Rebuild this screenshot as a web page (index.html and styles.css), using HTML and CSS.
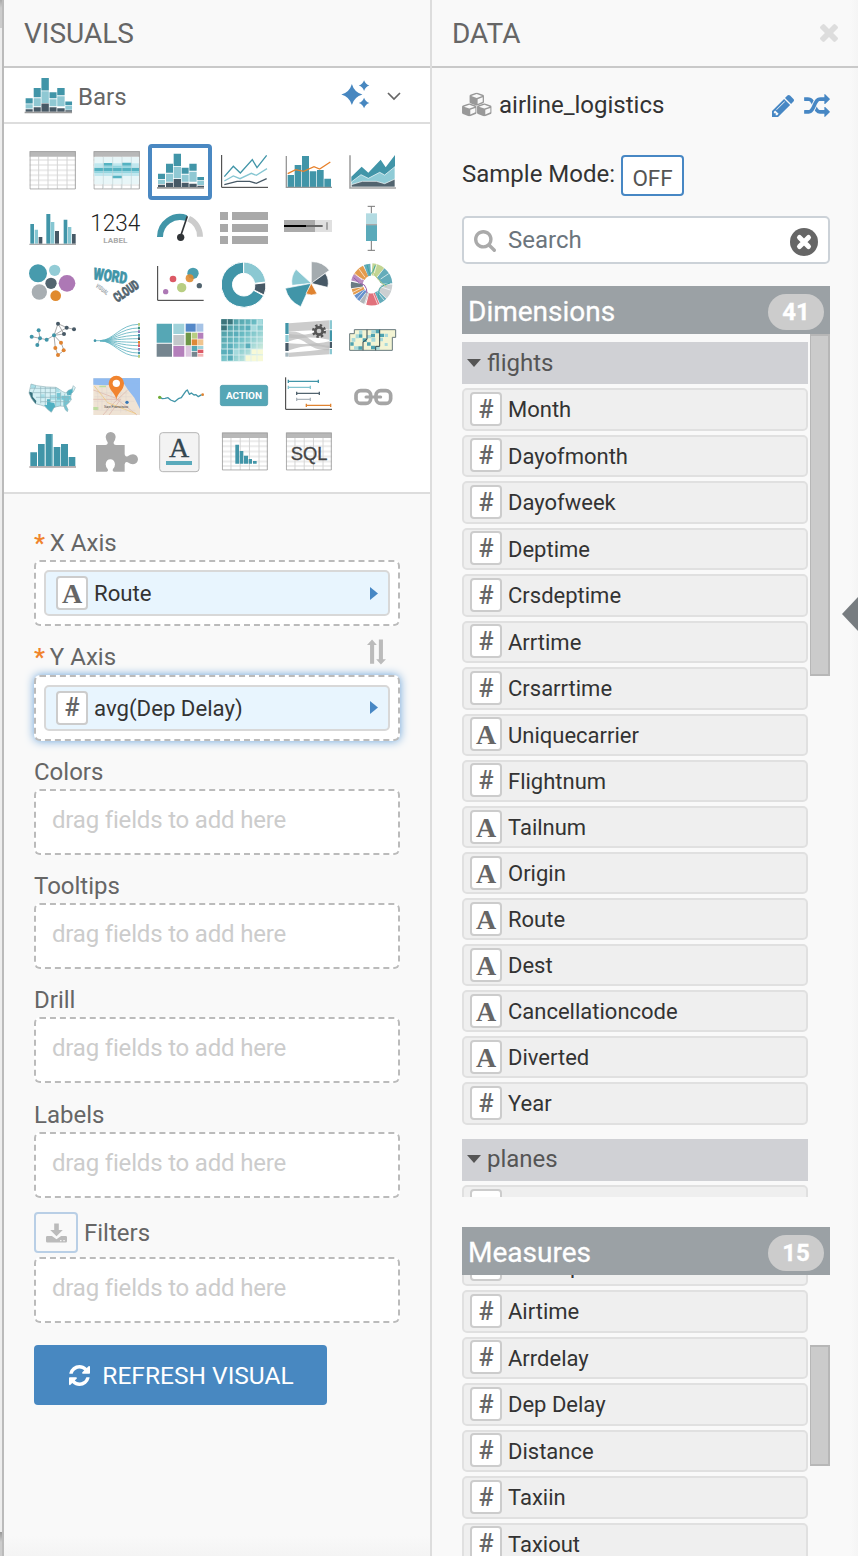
FILE: index.html
```html
<!DOCTYPE html>
<html lang="en">
<head>
<meta charset="utf-8">
<title>Visual builder</title>
<link rel="stylesheet" href="styles.css">
</head>
<body>
<svg class="defs" aria-hidden="true">
  <defs>
    <symbol id="bars" viewBox="440 38 144 110">
      <path fill="#4195a8" d="M444 101h21v16h-21zM468 71h21v27h-21zM491 41h22v37h-22zM515 83h21v18h-21zM538 71h22v21h-22zM562 111h20v10h-20z"/>
      <path fill="#8fc8d3" d="M444 119h21v13h-21zM468 101h21v24h-21zM491 80h22v35h-22zM515 104h21v21h-21zM538 95h22v30h-22zM562 123h20v12h-20z"/>
      <path fill="#475966" d="M444 134h21v7h-21zM468 128h21v13h-21zM491 117h22v24h-22zM515 128h21v13h-21zM538 131h22v10h-22zM562 137h20v4h-20z"/>
      <path fill="#999" d="M441 141h141v5h-141z"/>
    </symbol>
    <symbol id="sheet" viewBox="0 0 140 116">
      <path fill="#fff" d="M0 0h140v116H0z"/>
      <path fill="#ececec" d="M0 24h140v6H0zM0 39h140v6H0zM0 55h140v6H0zM0 70h140v6H0zM0 85h140v6H0zM0 99h140v6H0z"/>
      <path fill="none" stroke="#d4d4d4" stroke-width="3" d="M28 16v98M56 16v98M84 16v98M113 16v98"/>
      <path fill="#b8b8b8" d="M0 0h140v17H0z"/>
      <path fill="none" stroke="#a5a5a5" stroke-width="3" d="M2 2h136v112H2z"/>
    </symbol>
    <symbol id="caret" viewBox="0 0 14 8"><path d="M0 0h14L7 8z"/></symbol>
    <symbol id="cube" viewBox="0 0 46 42">
      <path fill="#999" d="M0 11q0-3 3-4L21 1q2-1 4 0l18 6q3 1 3 4v19q0 2-3 4l-18 7q-2 1-4 0L3 34q-3-2-3-4z"/>
      <path fill="#f9f9f9" d="M6 11l17-6 17 6-17 6zM26 21l16-6v14l-16 7z"/>
    </symbol>
  </defs>
</svg>
<div class="app">
  <div class="edge"></div>
  <section class="visuals">
    <h1 class="title">VISUALS</h1>
    <div class="current">
      <svg class="current-icon"><use href="#bars"/></svg>
      <span class="current-name">Bars</span>
      <svg class="sparkle" viewBox="1024 240 86 88"><path d="M1056 252q7 25 32 32-25 7-32 32-7-25-32-32 25-7 32-32zM1093 241q4 12 16 16-12 4-16 16-4-12-16-16 12-4 16-16zM1093 294q4 12 16 16-12 4-16 16-4-12-16-16 12-4 16-16z"/></svg>
      <svg class="chevron" viewBox="0 0 14 9"><path d="M1 1l6 6 6-6"/></svg>
    </div>

    <div class="gallery">
      <svg viewBox="30 12 192 168"><use href="#sheet" x="58" y="33" width="140" height="116"/></svg>
      <svg viewBox="222 12 192 168">
        <use href="#sheet" x="250" y="33" width="140" height="116"/>
        <path fill="#e8f6f8" d="M253 51h134v82H253z"/>
        <path fill="#c0e7ee" d="M253 70h134v12H253zM253 94h134v14H253z"/>
        <path fill="#55b3c2" d="M253 83h134v11H253zM281 69h26v8h-26zM336 68h28v9h-28zM307 107h29v8h-29z"/>
        <path fill="#94d5df" d="M281 77h83v6h-83zM253 94h134v5H253z"/>
        <path fill="none" stroke="#c3d3d6" stroke-width="2" d="M280 50v95M308 50v95M336 50v95M364 50v95"/>
      </svg>
      <svg class="selected" viewBox="414 12 192 168"><use href="#bars" x="440" y="38" width="144" height="110"/></svg>
      <svg viewBox="6 12 192 168">
        <g fill="none" stroke-width="4"><path stroke="#333" stroke-width="3" d="M35 45v97h139"/><path stroke="#4195a8" d="M43 110l27-31 21 20 36-40 14 24 29-37"/><path stroke="#86c6d2" d="M43 123l27-15 20 8 34-16 15 6 32-20"/><path stroke="#475966" d="M43 134l38-10h38l20 6 31-14"/></g>
      </svg>
      <svg viewBox="198 12 192 168">
        <path fill="#4195a8" d="M233 105h19v36h-19zM254 75h20v66h-20zM276 48h21v93h-21zM299 94h20v47h-20zM321 90h20v51h-20zM343 116h20v25h-20z"/>
        <path fill="none" stroke="#999" stroke-width="4" d="M229 48v94h137"/><path fill="none" stroke="#e8812b" stroke-width="4" d="M233 101l24-12 24 5 31-14 17 7 32-21"/>
      </svg>
      <svg viewBox="390 12 192 168">
        <path fill="#4195a8" d="M424 110l31-30 20 18 37-39 15 23 28-37v96H424z"/>
        <path fill="#8fcbd6" stroke="#fff" stroke-width="2" d="M424 126l29-22 22 11 34-18 15 8 31-25v61H424z"/>
        <path fill="#52646f" stroke="#fff" stroke-width="2" d="M424 134l33-10h42l25 7 31-14v24H424z"/>
        <path fill="none" stroke="#a5a5a5" stroke-width="5" d="M420 46v98h138"/>
      </svg>

      <svg viewBox="30 180 192 168">
        <path fill="#4195a8" d="M61 252h11v59H61zM109 222h12v89h-12zM161 239h11v72h-11z"/><path fill="#86c6d2" d="M74 269h10v42H74zM122 246h11v65h-11zM174 261h10v50h-10z"/><path fill="#475966" d="M86 291h11v20H86zM135 273h12v38h-12zM186 282h11v29h-11z"/><path fill="#aaa" d="M58 311h140v4H58z"/>
      </svg>
      <svg viewBox="222 180 192 168">
        <text class="light" x="241" y="272" font-size="70" textLength="150" lengthAdjust="spacingAndGlyphs" fill="#222">1234</text>
        <text class="bold" x="280" y="308" font-size="24" textLength="72" lengthAdjust="spacingAndGlyphs" fill="#aaa">LABEL</text>
      </svg>
      <svg viewBox="414 180 192 168">
        <path fill="none" stroke="#4195a8" stroke-width="18" d="M450 291a60 60 0 0 1 79-57"/><path fill="none" stroke="#ccc" stroke-width="18" d="M536 236a60 60 0 0 1 34 54"/>
        <path stroke="#303437" stroke-width="5" d="M511 291l21-62"/><circle cx="512" cy="292" r="11" fill="#303437"/>
      </svg>
      <svg viewBox="6 180 192 168"><path fill="#a9a9a9" d="M30 216h24v24H30zM66 216h108v24H66zM30 252h24v24H30zM66 252h108v24H66zM30 288h24v24H30zM66 288h108v24H66z"/></svg>
      <svg viewBox="198 180 192 168"><path fill="#aaa" d="M222 240h93v36h-93z"/><path fill="#e0e0e0" d="M315 240h51v36h-51z"/><path fill="#666" d="M222 255h116v6H222z"/><path d="M222 255h66v6h-66z"/><path fill="#888" d="M349 247h4v22h-4z"/></svg>
      <svg viewBox="390 180 192 168"><path fill="none" stroke="#777" stroke-width="3" d="M473 199h22M484 199v21M484 303v28M473 331h22"/><path fill="#b3dbe2" d="M468 220h33v33h-33z"/><path fill="#5aaaba" d="M468 255h33v48h-33z"/><path fill="#aaa" d="M468 252h33v4h-33z"/></svg>

      <svg viewBox="30 3 192 168"><circle cx="84" cy="55" r="27" fill="#479bad"/><circle cx="134" cy="46" r="17" fill="#93ccd6"/><circle cx="123" cy="85" r="17" fill="#52646f"/><circle cx="171" cy="85" r="25" fill="#ad78b5"/><circle cx="88" cy="111" r="23" fill="#a8aeb2"/><circle cx="137" cy="122" r="16" fill="#e08a2e"/></svg>
      <svg viewBox="222 3 192 168">
        <text class="black" transform="translate(248 72) rotate(8)" font-size="48" textLength="102" lengthAdjust="spacingAndGlyphs" fill="#4195a8" stroke="#4195a8" stroke-width="2">WORD</text>
        <text class="black" transform="translate(256 95) rotate(38)" font-size="18" textLength="43" lengthAdjust="spacingAndGlyphs" fill="#a5adb2">VISUAL</text>
        <text class="black" transform="translate(322 143) rotate(-34)" font-size="40" textLength="83" lengthAdjust="spacingAndGlyphs" fill="#52646f" stroke="#52646f" stroke-width="2">CLOUD</text>
      </svg>
      <svg viewBox="414 3 192 168"><path fill="none" stroke="#333" stroke-width="3" d="M443 33v103h138"/><circle cx="549" cy="55" r="17" fill="#4a9eaf"/><circle cx="539" cy="70" r="12" fill="#df8b32" opacity=".9"/><circle cx="489" cy="72" r="10" fill="#dc5965"/><circle cx="515" cy="98" r="14" fill="#b8ce82"/><circle cx="568" cy="92" r="8" fill="#52646f"/><circle cx="467" cy="110" r="8" fill="#ad78b5"/></svg>
      <svg viewBox="6 3 192 168" stroke="#fff" stroke-width="3"><path fill="#4195a8" d="M101 21v34a34 34 0 1 0 30 51l30 16A68 68 0 1 1 101 21z"/><path fill="#8bc8d2" d="M101 21a68 68 0 0 1 66 60l-33 4a34 34 0 0 0-33-30z"/><path fill="#475966" d="M167 83a68 68 0 0 1-5 37l-30-15a34 34 0 0 0 2-18z"/></svg>
      <svg viewBox="198 3 192 168" stroke="#fff" stroke-width="2"><path fill="#a4abaf" d="M304 85V20a65 65 0 0 1 54 26z"/><path fill="#475966" d="M304 85l42-30a52 52 0 0 1 7 42z"/><path fill="#8bc8d2" d="M304 85l-46-42a62 62 0 0 0-12 48z"/><path fill="#4195a8" d="M304 85l-78 15a80 80 0 0 0 46 55z"/><path fill="#e08330" d="M304 85l-16 31a36 36 0 0 0 33 0z"/></svg>
      <svg viewBox="390 3 192 168">
        <g fill="none" stroke-width="36" opacity=".85"><path stroke="#b8ce82" d="M486 43a45 45 0 0 1 25 10"/><path stroke="#4a9eaf" d="M512 54a45 45 0 0 1 17 32"/><path stroke="#c3c7c9" d="M529 88a45 45 0 0 1-12 30"/><path stroke="#4a9eaf" d="M516 119a45 45 0 0 1-14 10"/><path stroke="#dc5965" d="M501 130a45 45 0 0 1-28 2"/><path stroke="#a4abaf" d="M471 131a45 45 0 0 1-11-6"/><path stroke="#4d7fc4" d="M459 124a45 45 0 0 1-11-12"/><path stroke="#e08a2e" d="M447 111a45 45 0 0 1-4-12"/><path stroke="#52646f" d="M441 97a45 45 0 0 1 0-14"/><path stroke="#ad78b5" d="M441 81a45 45 0 0 1 6-14"/><path stroke="#e08a2e" d="M448 66a45 45 0 0 1 19-18"/><path stroke="#4a9eaf" d="M468 47a45 45 0 0 1 14-3"/></g>
        <path fill="#fff" d="M460 86q16-9 18-23h13q7 15 27 24-12 6-14 20-16-4-24 8-6-19-20-29z"/>
        <path fill="none" stroke="#fff" stroke-width="2" d="M434 55l22 20M447 42l18 25M500 28l-9 33M536 56l-24 16M541 105l-31-10M522 135l-21-26M503 148l-15-37M463 148l12-36M440 132l24-27M425 114l32-16M422 78l32 8"/>
        <path fill="none" stroke="#995cae" stroke-width="3" d="M431 68q17 20 32 22 8 10 8 24"/><path fill="none" stroke="#3fa7a5" stroke-width="3" d="M471 29q6 23 9 30 10-6 16-28M540 84q-20 5-29 14-7 8-4 34"/><path fill="none" stroke="#b8ce82" stroke-width="3" d="M491 53q12 25 38 41"/>
      </svg>

      <svg viewBox="30 171 192 168"><path fill="none" stroke="#aaa" stroke-width="3" d="M65 245l25 5 20 4 22-13M86 226l4 24-8 20M132 241l12-35 26 12-38 23 30-4-18-31M170 218l22 5M132 241l4 38 8 21 18-14-9-23-21-22"/><g fill="#4195a8"><circle cx="65" cy="245" r="6"/><circle cx="86" cy="226" r="6"/><circle cx="90" cy="250" r="6"/><circle cx="82" cy="270" r="6"/><circle cx="110" cy="254" r="6"/><circle cx="132" cy="241" r="6"/></g><g fill="#475966"><circle cx="144" cy="206" r="6"/><circle cx="170" cy="218" r="6"/><circle cx="192" cy="223" r="6"/><circle cx="162" cy="237" r="6"/></g><g fill="#e08330"><circle cx="136" cy="279" r="6"/><circle cx="153" cy="263" r="6"/><circle cx="161" cy="286" r="6"/><circle cx="144" cy="300" r="6"/></g></svg>
      <svg viewBox="222 171 192 168"><path fill="none" stroke="#5fb2c0" stroke-width="2.5" d="M254 257h16C310 257 330 208 386 208M270 257C310 257 330 219 386 219M270 257C310 257 330 230 386 230M270 257C310 257 330 241 386 241M270 257C310 257 330 251 386 251M270 257C310 257 330 262 386 262M270 257C310 257 330 272 386 272M270 257C310 257 330 283 386 283M270 257C310 257 330 294 386 294M270 257C310 257 330 304 386 304"/><circle cx="255" cy="257" r="4" fill="#4195a8"/><path fill="#b8ce82" d="M384 204h6v8h-6zM384 300h6v8h-6z"/><path fill="#3e917d" d="M384 215h6v8h-6z"/><path fill="#8e77b9" d="M384 226h6v8h-6zM384 279h6v8h-6z"/><path fill="#4195a8" d="M384 237h6v8h-6zM384 290h6v8h-6z"/><path fill="#475966" d="M384 247h6v8h-6z"/><path fill="#e08330" d="M384 258h6v8h-6z"/><path fill="#dc5965" d="M384 268h6v8h-6z"/></svg>
      <svg viewBox="414 171 192 168"><path fill="#56a7b5" d="M440 206h46v57h-46zM545 273h17v15h-17z"/><path fill="#75858f" d="M440 266h46v39h-46zM545 290h17v15h-17z"/><path fill="#a0d2da" d="M490 206h33v31h-33zM563 273h17v9h-17z"/><path fill="#c2c7ca" d="M490 240h33v31h-33z"/><path fill="#b47fbb" d="M490 273h33v32h-33zM563 233h17v18h-17z"/><path fill="#5488c8" d="M527 206h30v24h-30z"/><path fill="#a6c3e6" d="M559 206h21v24h-21z"/><path fill="#6e9748" d="M527 233h16v38h-16z"/><path fill="#b8ce82" d="M545 233h17v18h-17z"/><path fill="#df8937" d="M545 253h17v18h-17z"/><path fill="#f0c48e" d="M563 253h17v18h-17z"/><path fill="#dcc6df" d="M527 273h16v32h-16z"/><path fill="#dc5965" d="M563 284h17v10h-17z"/><path fill="#f2b5b5" d="M563 296h17v9h-17z"/></svg>
      <svg viewBox="6 171 192 168">
        <defs><linearGradient id="heat" x1="0" y1="0" x2="1" y2="1"><stop offset="0" stop-color="#418f97"/><stop offset=".45" stop-color="#6bbdc5"/><stop offset=".7" stop-color="#a9dbd9"/><stop offset="1" stop-color="#f8fbdc"/></linearGradient></defs>
        <path fill="url(#heat)" d="M34 193h125v126H34z"/><path fill="#3d747b" d="M34 193h34v15H34zM34 210h17v16H34z"/><path fill="#5aaebb" d="M70 228h16v16H70zM106 211h16v15h-16zM52 264h17v16H52zM106 264h16v16h-16zM52 282h17v16H52zM34 282h17v16H34zM52 300h17v16H52z"/><path fill="#a5dadd" d="M124 211h17v16h-17zM141 193h17v16h-17zM70 282h16v16H70z"/><path fill="#f7f9d7" d="M124 282h35v16h-35zM106 300h53v18h-53z"/>
        <path fill="none" stroke="#ddeff0" stroke-width="2.5" d="M52 193v126M70 193v126M87 193v126M105 193v126M123 193v126M141 193v126M34 210h125M34 228h125M34 246h125M34 264h125M34 282h125M34 300h125"/>
      </svg>
      <svg viewBox="198 171 192 168"><path fill="#ccc" d="M237 205l121-9v26q-70 6-121 7zM237 237q50 9 121-15v32q-70-15-121 5zM237 265q70 6 121-6v21q-60-16-121 6zM237 293q60-4 121-12v17l-121 8z"/><path fill="#bbb" d="M237 229c60 0 60 43 121 43v14c-70 0-60-38-121-38z" opacity=".7"/><path fill="#4195a8" d="M226 204h10v33h-10zM359 226h7v33h-7z"/><path fill="#8bc8d2" d="M226 240h10v21h-10zM359 196h7v27h-7zM359 282h7v16h-7z"/><path fill="#475966" d="M226 264h10v24h-10zM359 261h7v18h-7z"/><path fill="#a4b6bd" d="M226 293h10v12h-10z"/><circle cx="327" cy="228" r="17" fill="none" stroke="#555" stroke-width="8" stroke-dasharray="7 6.35"/><circle cx="327" cy="228" r="11" fill="#ccc" stroke="#555" stroke-width="8"/></svg>
      <svg viewBox="390 171 192 168"><path fill="#f3f4d4" stroke="#65777b" stroke-width="3" d="M433 224h124v23h-10v39H419v-50h14z"/><path fill="#a8d9da" d="M437 238h10v12h-10zM470 240h13v10h-13zM484 225h12v10h-12zM524 236h10v10h-10zM508 248h11v11h-11zM432 274h13v10h-13zM497 274h12v10h-12zM524 264h9v9h-9zM425 249h11v11h-11zM447 226h10v11h-10zM484 249h12v11h-12z"/><path fill="#4da2b0" d="M447 238h10v10h-10zM458 250h12v11h-12zM483 236h12v11h-12zM509 236h13v10h-13zM421 262h10v10h-10zM445 274h12v10h-12zM471 262h11v10h-11zM483 272h12v11h-12zM497 224h12v11h-12z"/><path fill="none" stroke="#31484e" stroke-width="3" d="M471 224v29l-12 8v25M509 224v50h-12v12"/></svg>

      <svg viewBox="30 9 192 168">
        <defs><clipPath id="usa"><path d="M63 57l17 5 30 4 28 1 10 6 10 7 10 4 7-8 11-4 4-10 6 6-6 12-6 6-2 10 2 8-8 10-8 7 6 13-2 6-6-6-4-10-12-1-10 2-8 3-8 14-10-8-10-10-12-4-16-4-12-16-7-16z"/></clipPath></defs>
        <g clip-path="url(#usa)"><path fill="#d5f0f4" d="M50 50h150v100H50z"/><path fill="#a9dfe8" d="M63 57h15v12H63zM120 90h18v14h-18zM137 68h12v14h-12zM137 104h16v22h-16zM92 88h12v12H92z"/><path fill="#73c6d4" d="M140 84h12v20h-12zM154 92h32v12h-32zM160 104h18v36h-18z"/><path fill="#38727e" d="M55 79l13 4v12l11 13-2 10-13-8z"/><path fill="#4fb0c2" d="M111 103h10v9l12 2 3 12-12 18-10-9-12-15h9zM166 74l22-4v20h-16z"/><path fill="none" stroke="#8fb5bc" stroke-width="2" d="M78 61l-10 23M92 64v51M106 66v54M121 66v42M137 66v60M152 80v44M164 86v50M174 80v30M58 70h80M68 83h70M78 97h96M92 110h90"/></g>
        <path fill="none" stroke="#94b4ba" stroke-width="2" d="M63 57l17 5 30 4 28 1 10 6 10 7 10 4 7-8 11-4 4-10 6 6-6 12-6 6-2 10 2 8-8 10-8 7 6 13-2 6-6-6-4-10-12-1-10 2-8 3-8 14-10-8-10-10-12-4-16-4-12-16-7-16z"/>
      </svg>
      <svg viewBox="222 9 192 168"><path fill="#efe3d4" d="M250 40h140v110H250z"/><path fill="#8fbaf0" d="M325 40h65v92l-17-34-18-22-20-30z"/><path fill="#8fbaf0" d="M250 40h140v14l-62 2-40 5-38-2z"/><path fill="#bddd9e" d="M250 126h15v9h-15zM268 62h20v5h-20z"/><path fill="none" stroke="#ddb1a6" stroke-width="2" d="M250 75l66 24 65 51M279 150l26-30 48-45M250 103h82l-35 47"/><path fill="none" stroke="#f2c66a" stroke-width="2" d="M253 63l40 50 85 33"/><path fill="none" stroke="#d8cfca" d="M263 72v65M276 68v66M290 65v78M304 60v83M332 65v78M348 74v67M257 84h98M253 95h111M252 109h121M254 136h122"/><circle cx="351" cy="112" r="5" fill="#3777b6"/><text x="282" y="128" font-size="12" textLength="73" lengthAdjust="spacingAndGlyphs" fill="#444">San Francisco</text><path fill="#f1842f" d="M319 104c-2-18-23-28-23-49a23 23 0 1 1 46 0c0 21-21 31-23 49z"/><circle cx="319" cy="55" r="11" fill="#fff"/></svg>
      <svg viewBox="414 9 192 168"><path fill="none" stroke="#4195a8" stroke-width="4" stroke-linejoin="round" d="M447 96l10 5 8-1 9-2 8 7 12 5 11-9 9-3 13-19 5-4 6 13 6-4 8 6 6-1 7 6 10-6"/><circle cx="449" cy="97" r="5" fill="#71ac36"/><circle cx="578" cy="89" r="4" fill="#e08330"/></svg>
      <svg viewBox="6 9 192 168"><rect x="31" y="61" width="142" height="61" rx="6" fill="#55a6b6" stroke="#3e92a5" stroke-width="2"/><text class="bold" x="48" y="101" font-size="27" textLength="108" lengthAdjust="spacingAndGlyphs" fill="#fff">ACTION</text></svg>
      <svg viewBox="198 9 192 168" fill="none" stroke-width="4"><path stroke="#333" stroke-width="3" d="M227 37v96h139"/><path stroke="#4195a8" d="M235 49h90M235 44v10M325 44v10"/><path stroke="#83c4cf" d="M235 67h66M235 62v10M301 62v10"/><path stroke="#52646f" d="M260 85h68M260 80v10M328 80v10"/><path stroke="#acb5bc" d="M260 103h41M260 98v10M301 98v10"/><path stroke="#e08330" d="M289 121h73M289 116v10M362 116v10"/></svg>
      <svg viewBox="390 9 192 168" fill="none" stroke="#a5a5a5" stroke-width="11"><rect x="438" y="77" width="44" height="38" rx="14"/><rect x="498" y="77" width="44" height="38" rx="14"/><path stroke-width="9" stroke-linecap="round" d="M468 96h44"/></svg>

      <svg viewBox="30 177 192 168"><path fill="#4195a8" d="M61 262h20v42H61zM84 237h20v67H84zM107 207h21v97h-21zM131 246h20v58h-20zM153 237h21v67h-21zM176 276h20v28h-20z"/><path fill="#8bc8d2" d="M125 207h3v97h-3z"/><path fill="#a99fa0" d="M58 304h140v4H58z"/></svg>
      <svg viewBox="222 177 192 168"><path fill="#a9a9a9" d="M258 240h28q8 0 7-8-5-7-6-16 1-14 15-15 14 1 15 15-1 9-6 16-1 8 7 8h26v28q2 9 9 6 8-6 16-6 14 1 15 15-1 13-15 15-8 0-16-6-7-3-9 6v22h-32q-6-1-3-8 6-6 6-14-2-15-14-15t-14 15q0 8 6 14 3 7-3 8h-32z"/></svg>
      <svg viewBox="414 177 192 168"><rect x="449" y="203" width="118" height="117" rx="9" fill="#f3f3f3" stroke="#b5b5b5" stroke-width="3"/><text class="serif" x="477" y="277" font-size="84" fill="#34464f" stroke="#34464f">A</text><path fill="#5aaabb" d="M468 288h78v12h-78z"/></svg>
      <svg viewBox="6 177 192 168"><use href="#sheet" x="35" y="202" width="139" height="115"/><path fill="#4195a8" d="M76 239h11v57H76zM89 258h11v38H89zM102 272h12v24h-12zM116 282h10v14h-10zM129 288h11v8h-11z"/></svg>
      <svg viewBox="198 177 192 168"><use href="#sheet" x="227" y="202" width="139" height="115"/><text class="sans" x="242" y="284" font-size="55" fill="#444" stroke="#444">SQL</text></svg>
    </div>

    <div class="shelves">
      <div class="label"><b>*</b><span> X Axis</span></div>
      <div class="shelf"><div class="chip"><i class="type alpha">A</i><span>Route</span><svg class="arrow" viewBox="0 0 8 13"><path d="M0 0l8 6.500-8 6.500z"/></svg></div></div>
      <div class="label"><b>*</b><span> Y Axis</span><svg class="swap" viewBox="1102 356 56 76"><path d="M1117 357l14 16h-8v56h-12v-56h-9zM1143 431l-14-16h8v-58h12v58h9z"/></svg></div>
      <div class="shelf focus"><div class="chip"><i class="type">#</i><span>avg(Dep Delay)</span><svg class="arrow" viewBox="0 0 8 13"><path d="M0 0l8 6.500-8 6.500z"/></svg></div></div>
      <div class="label">Colors</div><div class="shelf empty">drag fields to add here</div>
      <div class="label">Tooltips</div><div class="shelf empty">drag fields to add here</div>
      <div class="label">Drill</div><div class="shelf empty">drag fields to add here</div>
      <div class="label">Labels</div><div class="shelf empty">drag fields to add here</div>
      <div class="filters">
        <span class="download"><svg viewBox="137 98 64 60"><path d="M162 99h14v20h12l-19 19-19-19h12zM141 137h14l14 10 14-10h14q4 0 4 4v12q0 4-4 4h-56q-4 0-4-4v-12q0-4 4-4z"/><path fill="#f9f9f9" d="M180 149h4v4h-4zM190 149h4v4h-4z"/></svg></span>
        <span>Filters</span>
      </div>
      <div class="shelf empty">drag fields to add here</div>
      <button class="refresh"><svg viewBox="128 128 1536 1536"><path d="M1639 1056q0 5-1 7-64 268-268 434.500t-478 166.500q-146 0-282.500-55t-243.500-157l-129 129q-19 19-45 19t-45-19-19-45v-448q0-26 19-45t45-19h448q26 0 45 19t19 45-19 45l-137 137q71 66 161 102t187 36q134 0 250-65t186-179q11-17 53-117 8-23 30-23h192q13 0 22.500 9.500t9.500 22.500zm25-800v448q0 26-19 45t-45 19h-448q-26 0-45-19t-19-45 19-45l138-138q-148-137-349-137-134 0-250 65t-186 179q-11 17-53 117-8 23-30 23h-199q-13 0-22.500-9.500t-9.500-22.500v-7q65-268 270-434.500t480-166.500q146 0 284 55.500t245 156.500l130-129q19-19 45-19t45 19 19 45z"/></svg><span>REFRESH VISUAL</span></button>
    </div>
  </section>

  <section class="data">
    <h1 class="title">DATA
      <svg class="close" viewBox="302 366 1188 1188"><path d="M1490 1322q0 40-28 68l-136 136q-28 28-68 28t-68-28l-294-294-294 294q-28 28-68 28t-68-28l-136-136q-28-28-28-68t28-68l294-294-294-294q-28-28-28-68t28-68l136-136q28-28 68-28t68 28l294 294 294-294q28-28 68-28t68 28l136 136q28 28 28 68t-28 68l-294 294 294 294q28 28 28 68z"/></svg>
    </h1>
    <div class="body">
      <div class="source">
        <svg class="cubes" viewBox="95 276 90 74"><use href="#cube" x="117" y="277" width="44" height="40"/><use href="#cube" x="95" y="309" width="44" height="40"/><use href="#cube" x="140" y="309" width="44" height="40"/></svg>
        <span class="source-name">airline_logistics</span>
        <svg class="pencil" viewBox="128 149 1515 1515"><path d="M491 1536l91-91-235-235-91 91v107h128v128h107zm523-928q0-22-22-22-10 0-17 7l-542 542q-7 7-7 17 0 22 22 22 10 0 17-7l542-542q7-7 7-17zm-54-192l416 416-832 832h-416v-416zm683 96q0 53-37 90l-166 166-416-416 166-165q36-38 90-38 53 0 91 38l235 234q37 39 37 91z"/></svg>
        <svg class="random" viewBox="0 32 1792 1600"><path d="M666 481q-60 92-137 273-22-45-37-72.500t-40.500-63.500-51-56.500-63-35-81.500-14.500h-224q-14 0-23-9t-9-23v-192q0-14 9-23t23-9h224q250 0 410 225zm1126 799q0 14-9 23l-320 320q-9 9-23 9-13 0-22.500-9.500t-9.500-22.500v-192q-32 0-85 .5t-81 1-73-1-71-5-64-10.500-63-18.500-58-28.500-59-40-55-53.500-56-69.500q59-93 136-273 22 45 37 72.500t40.500 63.500 51 56.500 63 35 81.500 14.500h256v-192q0-14 9-23t23-9q12 0 24 10l319 319q9 9 9 23zm0-896q0 14-9 23l-320 320q-9 9-23 9-13 0-22.500-9.500t-9.500-22.500v-192h-256q-48 0-87 15t-69 45-51 61.500-45 77.500q-32 62-78 171-29 66-49.500 111t-54 105-64 100-74 83-90 68.500-106.500 42-128 16.500h-224q-14 0-23-9t-9-23v-192q0-14 9-23t23-9h224q48 0 87-15t69-45 51-61.500 45-77.500q32-62 78-171 29-66 49.500-111t54-105 64-100 74-83 90-68.500 106.500-42 128-16.500h256v-192q0-14 9-23t23-9q12 0 24 10l319 319q9 9 9 23z"/></svg>
      </div>
      <div class="sample"><span>Sample Mode:</span><button class="off">OFF</button></div>
      <div class="search">
        <svg class="lens" viewBox="64 128 1664 1664"><path d="M1216 832q0-185-131.500-316.500t-316.500-131.500-316.500 131.500-131.500 316.500 131.500 316.500 316.500 131.500 316.500-131.500 131.500-316.500zm512 832q0 52-38 90t-90 38q-54 0-90-38l-343-342q-179 124-399 124-143 0-273.500-55.500t-225-150-150-225-55.500-273.500 55.500-273.500 150-225 225-150 273.500-55.500 273.500 55.500 225 150 150 225 55.500 273.500q0 220-124 399l343 343q37 37 37 90z"/></svg>
        <span>Search</span>
        <svg class="clear" viewBox="0 0 28 28"><circle cx="14" cy="14" r="14" fill="#666"/><path stroke="#fff" stroke-width="5" stroke-linecap="round" d="M9.500 9.500l9 9M18.500 9.500l-9 9"/></svg>
      </div>

      <div class="bar">Dimensions<span class="badge">41</span></div>
      <div class="pane dims">
        <div class="list">
          <div class="group"><svg><use href="#caret"/></svg>flights</div>
          <div class="item"><i class="type">#</i>Month</div>
          <div class="item"><i class="type">#</i>Dayofmonth</div>
          <div class="item"><i class="type">#</i>Dayofweek</div>
          <div class="item"><i class="type">#</i>Deptime</div>
          <div class="item"><i class="type">#</i>Crsdeptime</div>
          <div class="item"><i class="type">#</i>Arrtime</div>
          <div class="item"><i class="type">#</i>Crsarrtime</div>
          <div class="item text"><i class="type alpha">A</i>Uniquecarrier</div>
          <div class="item"><i class="type">#</i>Flightnum</div>
          <div class="item text"><i class="type alpha">A</i>Tailnum</div>
          <div class="item text"><i class="type alpha">A</i>Origin</div>
          <div class="item text"><i class="type alpha">A</i>Route</div>
          <div class="item text"><i class="type alpha">A</i>Dest</div>
          <div class="item text"><i class="type alpha">A</i>Cancellationcode</div>
          <div class="item text"><i class="type alpha">A</i>Diverted</div>
          <div class="item"><i class="type">#</i>Year</div>
          <div class="group next"><svg><use href="#caret"/></svg>planes</div>
          <div class="item text"><i class="type alpha">A</i></div>
        </div>
        <div class="thumb"></div>
      </div>

      <div class="bar">Measures<span class="badge">15</span></div>
      <div class="pane meas">
        <div class="list">
          <div class="item"><i class="type">#</i>Crselapsedtime</div>
          <div class="item"><i class="type">#</i>Airtime</div>
          <div class="item"><i class="type">#</i>Arrdelay</div>
          <div class="item"><i class="type">#</i>Dep Delay</div>
          <div class="item"><i class="type">#</i>Distance</div>
          <div class="item"><i class="type">#</i>Taxiin</div>
          <div class="item"><i class="type">#</i>Taxiout</div>
        </div>
        <div class="thumb"></div>
      </div>
    </div>
    <svg class="handle" viewBox="0 0 16 34"><path d="M16 0v34L0 17z"/></svg>
  </section>
</div>
</body>
</html>
```
FILE: styles.css
```css
* { box-sizing: border-box; }
body { margin: 0; font-family: Roboto, "Liberation Sans", sans-serif; color: #333; background: #f9f9f9; }
svg { display: block; flex: none; }
.defs { position: absolute; width: 0; height: 0; }
.app { display: flex; width: 858px; height: 1556px; overflow: hidden; }
.edge { width: 4px; flex: none; border-right: 2px solid #bbb; background: linear-gradient(#aaa 0, #ccc 8px, #ccc 28px, #eee 28px, #eee 1532px, #999 1532px, #ccc 1542px); }
.visuals { width: 426px; flex: none; background: linear-gradient(#f9f9f9 1536px, #f4f4f4); }
.data { position: relative; width: 428px; flex: none; height: 1556px; overflow: hidden; border-left: 2px solid #ddd; background: linear-gradient(90deg, #f9f9f9 418px, #f5f5f5); }

.title { display: flex; align-items: center; justify-content: space-between; height: 68px; margin: 0; padding: 0 20px; border-bottom: 2px solid #c9c9c9; font-size: 28px; font-weight: 400; color: #666; }
.close { width: 18px; height: 18px; margin-right: 0; fill: #ddd; }

.current { display: flex; align-items: center; height: 56px; padding: 0 29px 0 20px; border-bottom: 2px solid #ddd; background: #fff; font-size: 24px; color: #666; }
.current-icon { width: 49px; height: 37px; }
.current-name { margin: 4px auto 0 5px; }
.sparkle { width: 29px; height: 29px; margin-right: 17px; margin-top: -1px; fill: #4787c0; }
.chevron { width: 14px; height: 9px; margin-top: 2px; fill: none; stroke: #666; stroke-width: 1.7; }

.gallery { display: grid; grid-template-columns: repeat(6, 64px); grid-auto-rows: 56px; height: 370px; padding: 20px 0 0 16px; border-bottom: 2px solid #ddd; background: #fff; }
.gallery > svg { width: 64px; height: 56px; }
.gallery > .selected { outline: 4px solid #4a88c2; outline-offset: -4px; border-radius: 4px; }
.light { font-weight: 300; }
.bold { font-weight: 700; }
.black { font-weight: 900; }
.serif { font-family: "Liberation Serif", serif; }
.sans { font-family: "Liberation Sans", sans-serif; }

.shelves { padding: 18px 30px 0; font-size: 24px; color: #666; }
.label { display: flex; align-items: center; height: 48.3px; padding-top: 14px; white-space: pre; }
.label b { margin-right: 0; font-weight: 700; color: #f0842c; }
.label b + span { margin-left: -1px; }
.swap { width: 19px; height: 26px; margin: -11px 14px 0 auto; fill: #bbb; }
.shelf { height: 66px; padding: 8px; border: 2px dashed #bbb; border-radius: 6px; background: #fff; }
.shelf.empty { padding: 15px 16px; line-height: 28px; letter-spacing: -.18px; color: #ccc; }
.shelf.focus { box-shadow: 0 0 10px #66a0d8; }
.chip { display: flex; align-items: center; height: 46px; padding: 0 10px; border: 2px solid #d8d8d8; border-radius: 5px; background: #e8f5fe; color: #333; font-size: 22.2px; }
.chip .type { margin-right: 6px; }
.arrow { width: 8px; height: 13px; margin-left: auto; fill: #4787c4; }
.type { flex: none; display: block; width: 32px; height: 34px; border: 2px solid #ccc; border-radius: 4px; background: #fff; color: #666; font: 500 25px/30px Roboto, sans-serif; text-align: center; }
.type.alpha { font: 700 28px/31px "Liberation Serif", serif; }
.filters { display: flex; align-items: flex-start; height: 59.500px; padding-top: 14.500px; gap: 6px; line-height: 43px; }
.download { display: flex; align-items: center; justify-content: center; width: 44px; height: 41px; border: 2px solid #b9cfe6; border-radius: 4px; }
.download svg { width: 21px; height: 20px; fill: #bbb; }
.refresh { display: flex; align-items: center; justify-content: center; gap: 12px; width: 293px; height: 60px; margin-top: 22px; padding: 0 0 0 2px; border: 0; border-radius: 4px; background: #4888c1; color: #fff; font: 400 24.500px Roboto, sans-serif; white-space: nowrap; }
.refresh svg { width: 21px; height: 21px; fill: #fff; }

.body { width: 398px; padding-left: 30px; }
.source { display: flex; align-items: center; height: 76px; font-size: 24px; }
.cubes { width: 30px; height: 25px; margin-top: -3px; }
.source-name { margin: -2px auto 0 7px; }
.pencil { width: 22px; height: 22px; margin-right: 10px; fill: #4787c4; }
.random { width: 26px; height: 23px; margin-top: -2px; fill: #4787c4; }
.sample { display: flex; align-items: flex-start; gap: 6px; height: 61px; margin-top: 11px; font-size: 24px; line-height: 38px; }
.off { width: 63px; height: 41px; padding: 4px 0 0; border: 2px solid #4787c4; border-radius: 4px; background: #fff; color: #555; font: 400 22.500px Roboto, sans-serif; }
.search { display: flex; align-items: center; height: 48px; padding: 0 10px; border: 2px solid #ccd2d8; border-radius: 5px; background: #fff; font-size: 24px; color: #6c757d; }
.search span { margin: 0 auto 0 12px; }
.lens { width: 22px; height: 22px; fill: #aaa; margin-top: 2px; }
.clear { width: 28px; height: 28px; margin-top: 3px; }

.bar { position: relative; z-index: 1; display: flex; align-items: center; justify-content: space-between; height: 48px; margin-top: 22px; padding: 2px 6px 0; background: #9ba1a5; color: #fff; font-size: 28px; -webkit-text-stroke: .3px #fff; }
.badge { width: 56px; height: 36px; margin-top: 2px; border-radius: 18px; background: #ccc; font-size: 24px; font-weight: 700; line-height: 36px; text-align: center; }
.pane { display: flex; gap: 2px; overflow: hidden; }
.dims { height: 863px; }
.dims .list { padding-top: 8px; }
.dims + .bar { margin-top: 30px; }
.meas { height: 281px; }
.meas .list { margin-top: -31.500px; }
.list { width: 346px; flex: none; }
.group { display: flex; align-items: center; height: 42px; margin-bottom: 4px; padding-left: 5px; background: #d0d1d5; color: #555; font-size: 24px; }
.group svg { width: 14px; height: 8px; margin-right: 6px; fill: #555; }
.group.next { height: 42.500px; margin-top: 14px; padding-bottom: 2px; }
.item { display: flex; align-items: center; gap: 6px; height: 42.500px; margin-bottom: 4px; padding: 1px 6px 0; border: 2px solid #e0e0e0; border-radius: 5px; background: #efefef; font-size: 22px; white-space: nowrap; }
.item.text { height: 42px; }
.item .type { margin-top: -2px; }
.item .type:not(.alpha) { line-height: 31px; }
.thumb { width: 20px; height: 342px; border: 2px solid #b7b7b7; border-left-width: 1px; background: #cbcbcb; }
.meas .thumb { height: 121px; margin-top: 70px; }
.handle { position: absolute; top: 597px; right: 0; width: 16px; height: 34px; fill: #777c80; }
```
